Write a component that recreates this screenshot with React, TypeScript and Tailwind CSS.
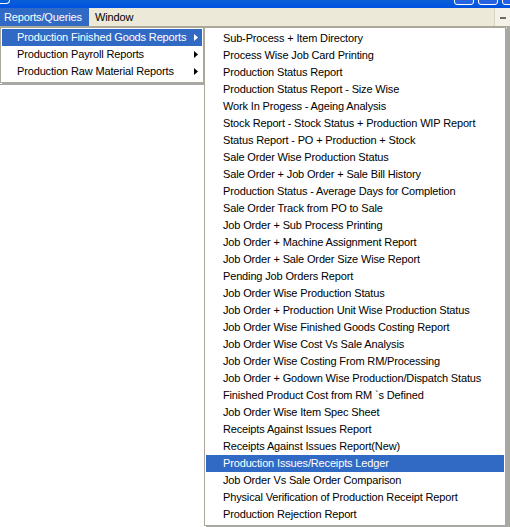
const finishedGoods = [
  'Sub-Process + Item Directory',
  'Process Wise Job Card Printing',
  'Production Status Report',
  'Production Status Report - Size Wise',
  'Work In Progess - Ageing Analysis',
  'Stock Report - Stock Status + Production WIP Report',
  'Status Report - PO + Production + Stock',
  'Sale Order Wise Production Status',
  'Sale Order + Job Order + Sale Bill History',
  'Production Status - Average Days for Completion',
  'Sale Order Track from PO to Sale',
  'Job Order + Sub Process Printing',
  'Job Order + Machine Assignment Report',
  'Job Order + Sale Order Size Wise Report',
  'Pending Job Orders Report',
  'Job Order Wise Production Status',
  'Job Order + Production Unit Wise Production Status',
  'Job Order Wise Finished Goods Costing Report',
  'Job Order Wise Cost Vs Sale Analysis',
  'Job Order Wise Costing From RM/Processing',
  'Job Order + Godown Wise Production/Dispatch Status',
  'Finished Product Cost from RM `s Defined',
  'Job Order Wise Item Spec Sheet',
  'Receipts Against Issues Report',
  'Receipts Against Issues Report(New)',
  'Production Issues/Receipts Ledger',
  'Job Order Vs Sale Order Comparison',
  'Physical Verification of Production Receipt Report',
  'Production Rejection Report',
]

const groups = [
  'Production Finished Goods Reports',
  'Production Payroll Reports',
  'Production Raw Material Reports',
]

function Arrow({ white }: { white?: boolean }) {
  return (
    <svg width="4" height="7" viewBox="0 0 4 7" className="shrink-0">
      <path d="M0 0L4 3.5L0 7Z" fill={white ? '#ffffff' : '#000000'} />
    </svg>
  )
}

export default function App() {
  return (
    <div
      className="relative w-[510px] h-[527px] overflow-hidden bg-white text-[11px] leading-none tracking-[-0.15px] text-black"
      style={{ fontFamily: '"Liberation Sans", Arial, sans-serif' }}
    >
      {/* title bar remains */}
      <div className="relative h-[8px] bg-gradient-to-b from-[#0a5fd8] to-[#0050e0]">
        <div className="absolute left-0 top-0 h-[4px] w-[10px] border-b border-r border-white rounded-br-sm" />
        <div className="absolute right-[36px] top-[-6px] h-[11px] w-[20px] rounded-b-[3px] border border-white bg-[#2663e0]" />
        <div className="absolute right-[12px] top-[-6px] h-[11px] w-[20px] rounded-b-[3px] border border-white bg-[#2663e0]" />
        <div className="absolute right-[-12px] top-[-6px] h-[11px] w-[20px] rounded-b-[3px] border border-white bg-[#2663e0]" />
      </div>

      {/* menu bar */}
      <div className="flex h-[19px] items-stretch bg-[#ece9d8] border-b border-[#aca899]">
        <div className="flex items-center bg-[#316ac5] pl-[4px] pr-[4px] text-white w-[89px]">Reports/Queries</div>
        <div className="flex items-center pl-[6px]">Window</div>
        <div className="ml-auto flex w-[16px] items-center justify-center bg-[#f4f2e8] border-l border-[#d8d4c4]">
          <div className="h-[2px] w-[6px] bg-[#6b6b6b] mt-[2px]" />
        </div>
      </div>

      {/* window body */}
      <div className="flex h-[500px]">
        <div className="flex-1 flex flex-col">
          <div className="h-[57px]" />
          <div className="h-px w-[200px] border-t border-dotted border-[#9a9a9a]" />
        </div>
        <div className="w-[4px] bg-[#a8a8a0] border-l border-[#d0d0c8]" />
      </div>

      {/* first level menu */}
      <div className="absolute left-0 top-[27px] w-[204px] border border-[#aca899] bg-white pt-[1px] pb-[2px] shadow-[2px_2px_0_#a8a8a8]">
        {groups.map((g, i) => (
          <div
            key={g}
            className={`flex h-[17px] items-center pl-[15px] pr-[4px] mx-[1px] ${i === 0 ? 'bg-[#316ac5] text-white' : ''}`}
          >
            <span className="flex-1">{g}</span>
            <Arrow white={i === 0} />
          </div>
        ))}
      </div>

      {/* second level menu */}
      <div className="absolute left-[204px] top-[27px] w-[302px] border border-[#aca899] bg-white py-[2px] shadow-[2px_2px_0_#a8a8a8]">
        {finishedGoods.map((t) => (
          <div
            key={t}
            className={`flex h-[17px] items-center pl-[17px] mx-[1px] ${t === 'Production Issues/Receipts Ledger' ? 'bg-[#316ac5] text-white' : ''}`}
          >
            {t}
          </div>
        ))}
      </div>
    </div>
  )
}
